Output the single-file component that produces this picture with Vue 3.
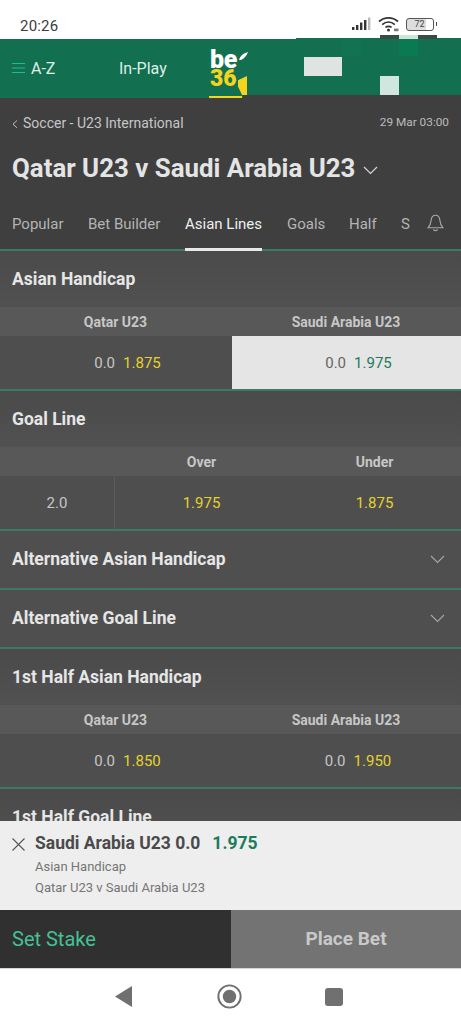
<script setup>
const tabs = [
  { label: 'Popular', width: 76 },
  { label: 'Bet Builder', width: 97 },
  { label: 'Asian Lines', width: 102, active: true },
  { label: 'Goals', width: 62 },
  { label: 'Half', width: 52 },
  { label: 'S', width: 30 }
]
</script>

<template>
  <div class="phone">
    <div class="status">
      <span class="time">20:26</span>
      <div class="status-icons">
        <svg class="signal" width="20" height="14" viewBox="0 0 20 14">
          <rect x="0" y="10" width="2.4" height="3" fill="#333" />
          <rect x="4" y="8" width="2.4" height="5" fill="#333" />
          <rect x="8" y="5.5" width="2.4" height="7.5" fill="#333" />
          <rect x="12" y="3" width="2.4" height="10" fill="#333" />
          <rect x="16" y="0.5" width="2.4" height="12.5" fill="#bbb" />
        </svg>
        <svg class="wifi" width="22" height="16" viewBox="0 0 22 16" fill="none" stroke="#333" stroke-width="1.7">
          <path d="M1 5.5C6.5 0.6 14.5 0.6 20 5.5" />
          <path d="M4.2 8.6C8 5.4 13 5.4 16.8 8.6" />
          <path d="M7.4 11.4C9.5 9.9 11.5 9.9 13.6 11.4" />
          <circle cx="10.5" cy="14" r="1.5" fill="#333" stroke="none" />
          <rect x="16" y="12.6" width="4.5" height="2.6" fill="#777" stroke="none" />
        </svg>
        <div class="battery"><span>72</span></div>
        <i class="nub"></i>
      </div>
    </div>

    <header class="topbar">
      <div class="az">
        <svg width="13" height="12" viewBox="0 0 13 12" stroke="#1fbd8c" stroke-width="1.2">
          <path d="M0 1.5H13M0 6H13M0 10.5H13" />
        </svg>
        <span>A-Z</span>
      </div>
      <span class="inplay">In-Play</span>
      <div class="logo">
        <span class="be">be</span>
        <svg class="leaf" width="9" height="8" viewBox="0 0 9 8"><path d="M0 8C1 4 4 1.2 9 0C8 3.6 5 6.6 2 8Z" fill="#fff" /></svg>
        <span class="num">36</span>
        <i class="logo-block"></i>
        <i class="logo-line"></i>
      </div>
      <i class="glitch g-notch"></i>
      <i class="glitch g-white"></i>
      <i class="glitch g-mint"></i>
      <i class="glitch g-green-a"></i>
      <i class="glitch g-green-b"></i>
      <i class="glitch g-rise"></i>
      <i class="glitch g-top-a"></i>
      <i class="glitch g-top-b"></i>
      <i class="glitch g-top-c"></i>
    </header>

    <section class="event">
      <div class="crumb">
        <div class="crumb-left">
          <svg width="6" height="8" viewBox="0 0 6 8" fill="none" stroke="#bdbdbd" stroke-width="1"><path d="M5 0.5L1 4.2L5 7.8" /></svg>
          <span>Soccer - U23 International</span>
        </div>
        <span class="date">29 Mar 03:00</span>
      </div>
      <h1 class="title">
        Qatar U23 v Saudi Arabia U23
        <svg width="15" height="9" viewBox="0 0 15 9" fill="none" stroke="#d6d6d6" stroke-width="1.2"><path d="M1 1L7.5 7.5L14 1" /></svg>
      </h1>
      <nav class="tabs">
        <span v-for="t in tabs" :key="t.label" class="tab" :class="{ active: t.active }" :style="{ width: t.width + 'px' }">
          <span class="tab-label">{{ t.label }}</span>
        </span>
        <svg class="bell" width="17" height="18" viewBox="0 0 17 18" fill="none" stroke="#a9a9a9" stroke-width="1.1">
          <path d="M8.5 1.2C5.6 1.2 4.3 3.6 4.1 6.4C3.9 9.6 3.1 11.6 1 13.8H16C13.9 11.6 13.1 9.6 12.9 6.4C12.7 3.6 11.4 1.2 8.5 1.2Z" />
          <path d="M6.3 15.6C7 17 10 17 10.7 15.6" />
        </svg>
      </nav>
    </section>

    <main class="content">
      <section class="market">
        <h2 class="m-title">Asian Handicap</h2>
        <div class="cols heads"><span>Qatar U23</span><span>Saudi Arabia U23</span></div>
        <div class="cols odds">
          <div class="cell"><span class="line">0.0</span><span class="price">1.875</span></div>
          <div class="cell selected"><span class="line">0.0</span><span class="price">1.975</span></div>
        </div>
      </section>

      <section class="market">
        <h2 class="m-title">Goal Line</h2>
        <div class="goal heads"><span></span><span>Over</span><span>Under</span></div>
        <div class="goal odds">
          <div class="cell handicap"><span class="line">2.0</span></div>
          <div class="cell"><span class="price">1.975</span></div>
          <div class="cell"><span class="price">1.875</span></div>
        </div>
      </section>

      <section class="market collapsed">
        <h2 class="m-title">Alternative Asian Handicap</h2>
        <svg width="15" height="9" viewBox="0 0 15 9" fill="none" stroke="#a8a8a8" stroke-width="1.1"><path d="M1 1L7.5 7.5L14 1" /></svg>
      </section>

      <section class="market collapsed">
        <h2 class="m-title">Alternative Goal Line</h2>
        <svg width="15" height="9" viewBox="0 0 15 9" fill="none" stroke="#a8a8a8" stroke-width="1.1"><path d="M1 1L7.5 7.5L14 1" /></svg>
      </section>

      <section class="market">
        <h2 class="m-title">1st Half Asian Handicap</h2>
        <div class="cols heads"><span>Qatar U23</span><span>Saudi Arabia U23</span></div>
        <div class="cols odds">
          <div class="cell"><span class="line">0.0</span><span class="price">1.850</span></div>
          <div class="cell"><span class="line">0.0</span><span class="price">1.950</span></div>
        </div>
      </section>

      <section class="market">
        <h2 class="m-title">1st Half Goal Line</h2>
      </section>
    </main>

    <section class="slip">
      <svg class="close" width="13" height="13" viewBox="0 0 13 13" stroke="#555" stroke-width="1.1"><path d="M0.5 0.5L12.5 12.5M12.5 0.5L0.5 12.5" /></svg>
      <div class="slip-body">
        <div class="slip-main">Saudi Arabia U23 0.0<span class="slip-price">1.975</span></div>
        <div class="slip-sub">Asian Handicap</div>
        <div class="slip-sub">Qatar U23 v Saudi Arabia U23</div>
      </div>
    </section>

    <div class="actions">
      <div class="stake">Set Stake</div>
      <div class="place">Place Bet</div>
    </div>

    <nav class="navbar">
      <svg width="17" height="21" viewBox="0 0 17 21"><path d="M17 0V21L0 10.5Z" fill="#707070" /></svg>
      <svg width="25" height="25" viewBox="0 0 26 26">
        <circle cx="13" cy="13" r="11.6" fill="none" stroke="#707070" stroke-width="2" />
        <circle cx="13" cy="13" r="7" fill="#707070" />
      </svg>
      <i class="nav-square"></i>
    </nav>
  </div>
</template>

<style>
html, body { margin: 0; background: #fff; }
</style>

<style scoped>
.phone {
  width: 461px;
  height: 1024px;
  display: flex;
  flex-direction: column;
  overflow: hidden;
  font-family: Roboto, "Liberation Sans", sans-serif;
  background: #4f4f4f;
}
.status {
  height: 39px;
  flex: none;
  background: #fff;
  display: flex;
  justify-content: space-between;
  align-items: center;
  padding: 14px 24px 0 20px;
  box-sizing: border-box;
}
.time { font-size: 15px; color: #3c3c3c; letter-spacing: 0.2px; margin-top: -1px; }
.status-icons { display: flex; align-items: center; margin-top: -5px; }
.signal { margin-right: 6px; }
.wifi { margin-right: 6px; }
.battery {
  width: 26px;
  height: 11px;
  border: 1px solid #555;
  border-radius: 3px;
  display: flex;
  align-items: center;
  justify-content: center;
  background: linear-gradient(90deg, #ddd 72%, #fff 72%);
}
.battery span { font-size: 9px; color: #444; line-height: 1; }
.nub { width: 1.5px; height: 4px; background: #444; margin-left: 2px; }

.topbar {
  height: 59px;
  flex: none;
  background: #126f50;
  display: flex;
  align-items: center;
  position: relative;
  color: #dfeee8;
  font-size: 16px;
}
.az { display: flex; align-items: center; gap: 6px; margin-left: 12px; width: 107px; margin-top: -1px; }
.inplay { width: 91px; margin-top: -1px; }
.logo { position: relative; width: 40px; height: 59px; }
.be {
  position: absolute;
  left: 0;
  top: 12px;
  font-size: 25px;
  font-weight: 900;
  color: #fff;
  line-height: 18px;
  letter-spacing: -0.2px;
}
.leaf { position: absolute; left: 29px; top: 13px; }
.num {
  position: absolute;
  left: 0;
  top: 31px;
  font-size: 23px;
  font-weight: 900;
  color: #f3d51d;
  line-height: 18px;
  letter-spacing: 0;
}
.logo-block { position: absolute; left: 28px; top: 37px; width: 9px; height: 19px; background: #f3d51d; clip-path: polygon(0 22%, 100% 0, 100% 100%, 45% 100%, 0 55%); }
.logo-line { position: absolute; left: -1px; top: 57px; width: 33px; height: 2px; background: #f3d51d; z-index: 1; }

.glitch { position: absolute; display: block; }
.g-notch { left: 243px; right: 0; top: 56px; height: 3px; background: #3f3f3f; }
.g-white { left: 304px; top: 18px; width: 38px; height: 19px; background: #dfe3e1; }
.g-mint { left: 380px; top: 37px; width: 19px; height: 19px; background: #cfe7df; }
.g-green-a { left: 342px; top: 0; width: 19px; height: 17px; background: #11734f; }
.g-green-b { left: 399px; top: 0; width: 19px; height: 17px; background: #0a7a53; }
.g-rise { left: 296px; right: 0; top: -1px; height: 1px; background: #126f50; }
.g-top-a { left: 380px; top: -4px; width: 19px; height: 4px; background: #3a4a44; }
.g-top-b { left: 399px; top: -4px; width: 19px; height: 4px; background: #cfe2dc; }
.g-top-c { left: 418px; top: -4px; width: 19px; height: 4px; background: #3a4a44; }

.event { flex: none; height: 151px; background: #3f3f3f; border-bottom: 2px solid #3c7a63; }
.crumb { display: flex; justify-content: space-between; align-items: center; padding: 16px 12px 0; height: 17px; }
.crumb-left { display: flex; align-items: center; gap: 5px; font-size: 14px; color: #c6c6c6; }
.crumb-left svg { margin-top: 3px; }
.date { font-size: 11.8px; color: #bdbdbd; margin-top: -2px; }
.title {
  margin: 20px 0 0 12px;
  font-size: 25.85px;
  line-height: 34px;
  font-weight: 700;
  color: #e4e4e4;
  display: flex;
  align-items: center;
  gap: 8px;
  white-space: nowrap;
}
.title svg { margin-top: 4px; }
.tabs {
  display: flex;
  align-items: flex-end;
  padding-left: 12px;
  margin-top: 14px;
  height: 50px;
  position: relative;
  font-size: 15px;
  color: #b4b4b4;
}
.tab { display: block; flex: none; height: 41px; }
.tab-label { display: inline-block; height: 43px; line-height: 33px; white-space: nowrap; box-sizing: border-box; }
.tab.active .tab-label { color: #eee; border-bottom: 3px solid #e8e8e8; }
.bell { margin-bottom: 17px; margin-left: -4px; }

.content { flex: 1; min-height: 0; overflow: hidden; }
.market { border-bottom: 2px solid #3c7a63; background: linear-gradient(#4a4a4a, #515151 56px); }
.market:last-child { border-bottom: 0; }
.m-title {
  margin: 0;
  height: 56px;
  line-height: 56px;
  padding-left: 12px;
  font-size: 17.5px;
  font-weight: 700;
  color: #e6e6e6;
}
.collapsed { display: flex; justify-content: space-between; align-items: center; padding-right: 16px; height: 57px; background: #4f4f4f; }
.collapsed .m-title { height: 57px; line-height: 57px; }
.cols { display: grid; grid-template-columns: 231px 230px; }
.goal { display: grid; grid-template-columns: 115px 173px 173px; }
.heads { height: 29px; line-height: 28px; background: #585858; align-items: center; text-align: center; font-size: 14px; font-weight: 700; color: #c7c7c7; }
.odds { height: 53px; background: #4e4e4e; }
.cell { display: flex; align-items: center; justify-content: center; gap: 8px; font-size: 15px; }
.cols .cell { padding-left: 24px; }
.line { color: #c6c6c6; }
.price { color: #e6d22c; }
.handicap { border-right: 1px solid #5c5c5c; }
.selected { background: #e5e5e5; margin-left: 1px; }
.selected .line { color: #666; }
.selected .price { color: #23795e; }

.slip {
  height: 89px;
  flex: none;
  background: #eeeeee;
  display: flex;
  box-sizing: border-box;
  padding: 12px 0 0 12px;
}
.close { margin-top: 5px; margin-right: 10px; }
.slip-main { font-size: 17.5px; font-weight: 700; color: #4a4a4a; line-height: 20px; white-space: nowrap; }
.slip-price { color: #1b7c5b; margin-left: 12px; }
.slip-sub { font-size: 13px; color: #757575; line-height: 21px; }
.slip-main + .slip-sub { margin-top: 3px; }
.actions { height: 58px; flex: none; display: grid; grid-template-columns: 231px 230px; border-bottom: 1px solid #d5d5d5; }
.stake { background: #303030; color: #46c096; font-size: 20px; line-height: 58px; padding-left: 12px; }
.place { background: #737373; color: #c9c9c9; font-size: 19px; font-weight: 700; text-align: center; line-height: 58px; }
.navbar {
  height: 55px;
  flex: none;
  background: #fff;
  display: flex;
  align-items: center;
  padding-left: 115px;
  gap: 85px;
}
.nav-square { display: block; width: 18px; height: 18px; background: #707070; border-radius: 3px; margin-left: -2px; }
</style>
